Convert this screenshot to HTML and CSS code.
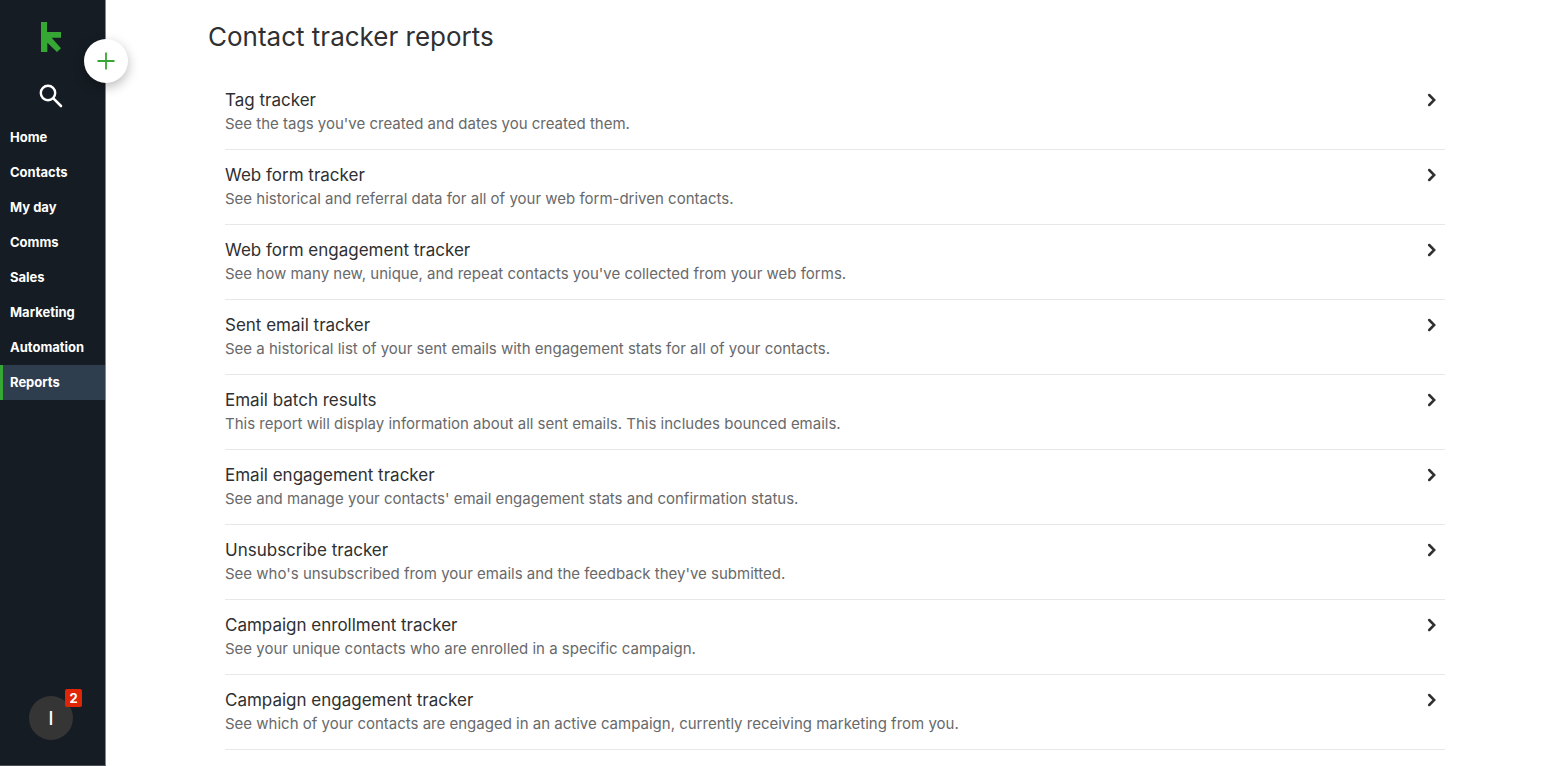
FILE: index.html
```html
<!DOCTYPE html>
<html lang="en">
<head>
<meta charset="utf-8">
<title>Contact tracker reports</title>
<link rel="stylesheet" href="styles.css">
</head>
<body>
<svg class="sprite" aria-hidden="true"><symbol id="chevron" viewBox="0 0 16 16"><path d="M5.2 3 L10.2 8 L5.2 13" fill="none" stroke="#2f3031" stroke-width="2.5" stroke-linecap="round"/></symbol></svg>
<div class="app">
  <aside class="sidebar">
    <a class="logo" href="#" aria-label="Keap home"><svg width="22" height="30" viewBox="0 0 66 90"><path fill="#36a635" d="M3 0H21V30H63V47H35L63 79L51 90L22 62V90H3Z"/></svg></a>
    <button class="search" type="button" aria-label="Search"><svg width="24" height="24" viewBox="0 0 24 24" fill="none" stroke="#fff" stroke-linecap="round"><circle cx="9" cy="9" r="7.2" stroke-width="2.4"/><path d="M14.6 14.6L22 22" stroke-width="2.6"/></svg></button>
    <button class="add" type="button" aria-label="Add"><svg width="18" height="18" viewBox="0 0 18 18" fill="none" stroke="#36a635" stroke-width="1.8"><path d="M9 0.5V17.5M0.5 9H17.5"/></svg></button>
    <nav class="nav">
      <a href="#">Home</a>
      <a href="#">Contacts</a>
      <a href="#">My day</a>
      <a href="#">Comms</a>
      <a href="#">Sales</a>
      <a href="#">Marketing</a>
      <a href="#">Automation</a>
      <a href="#" class="active" aria-current="page">Reports</a>
    </nav>
    <button class="avatar" type="button" aria-label="Account, 2 notifications">I<span class="badge">2</span></button>
  </aside>
  <main class="main">
    <h1>Contact tracker reports</h1>
    <div class="reports">
      <a class="report" href="#"><h2>Tag tracker</h2><p>See the tags you've created and dates you created them.</p><svg class="chevron"><use href="#chevron"/></svg></a>
      <a class="report" href="#"><h2>Web form tracker</h2><p>See historical and referral data for all of your web form-driven contacts.</p><svg class="chevron"><use href="#chevron"/></svg></a>
      <a class="report" href="#"><h2>Web form engagement tracker</h2><p>See how many new, unique, and repeat contacts you've collected from your web forms.</p><svg class="chevron"><use href="#chevron"/></svg></a>
      <a class="report" href="#"><h2>Sent email tracker</h2><p>See a historical list of your sent emails with engagement stats for all of your contacts.</p><svg class="chevron"><use href="#chevron"/></svg></a>
      <a class="report" href="#"><h2>Email batch results</h2><p>This report will display information about all sent emails. This includes bounced emails.</p><svg class="chevron"><use href="#chevron"/></svg></a>
      <a class="report" href="#"><h2>Email engagement tracker</h2><p>See and manage your contacts' email engagement stats and confirmation status.</p><svg class="chevron"><use href="#chevron"/></svg></a>
      <a class="report" href="#"><h2>Unsubscribe tracker</h2><p>See who's unsubscribed from your emails and the feedback they've submitted.</p><svg class="chevron"><use href="#chevron"/></svg></a>
      <a class="report" href="#"><h2>Campaign enrollment tracker</h2><p>See your unique contacts who are enrolled in a specific campaign.</p><svg class="chevron"><use href="#chevron"/></svg></a>
      <a class="report" href="#"><h2>Campaign engagement tracker</h2><p>See which of your contacts are engaged in an active campaign, currently receiving marketing from you.</p><svg class="chevron"><use href="#chevron"/></svg></a>
    </div>
  </main>
</div>
</body>
</html>
```

FILE: styles.css
```css
* { box-sizing: border-box; }
body { margin: 0; background: #fff; color: #2f3031; font-family: Inter, "Liberation Sans", sans-serif; }
a { color: inherit; text-decoration: none; }
button { padding: 0; border: 0; background: none; font-family: inherit; cursor: pointer; }
svg { display: block; }
.sprite { position: absolute; width: 0; height: 0; }
.app { display: flex; min-height: 100vh; }
.sidebar { position: relative; flex: 0 0 106px; display: flex; flex-direction: column; align-items: center; padding: 22px 3px 25px 0; border-right: 1px solid #85888b; border-bottom: 1px solid #4a4f56; background: #151c23; }
.logo { margin-bottom: 32px; }
.search { margin-bottom: 12px; }
.add { position: absolute; top: 39px; right: -23px; width: 44px; height: 44px; display: flex; align-items: center; justify-content: center; border-radius: 50%; background: #fff; box-shadow: 0 4px 12px rgba(0, 0, 0, .28); }
.nav { align-self: stretch; display: flex; flex-direction: column; margin-right: -3px; }
.nav a { padding: 0 7px; border-left: 3px solid transparent; color: #fff; font-size: 13px; font-weight: 700; line-height: 35px; }
.nav .active { border-left-color: #36a635; background: #2f3e4e; }
.avatar { position: relative; margin-top: auto; width: 44px; height: 44px; border-radius: 50%; background: #353535; color: #fff; font-size: 18px; font-weight: 500; }
.badge { position: absolute; top: -7px; right: -9px; width: 17px; border-radius: 2px; background: #de2606; font-size: 13px; font-weight: 700; line-height: 18px; }
.main { flex: 1; padding: 20px 115px 16px 102px; }
h1 { margin: 0 0 34px; font-size: 26px; font-weight: 400; line-height: 34px; }
.reports { padding-left: 17px; }
.report { display: grid; grid-template-columns: 1fr 16px; column-gap: 16px; padding: 0 5px 13px 0; margin-bottom: 13px; border-bottom: 1px solid #e8e8e8; }
.report:last-child { margin-bottom: 0; }
.report h2 { margin: 0; font-size: 17px; font-weight: 400; line-height: 24px; }
.report p { grid-row: 2; margin: 0; color: #68696a; font-size: 15px; line-height: 24px; }
.chevron { grid-column: 2; grid-row: 1; align-self: center; width: 16px; height: 16px; }
```
